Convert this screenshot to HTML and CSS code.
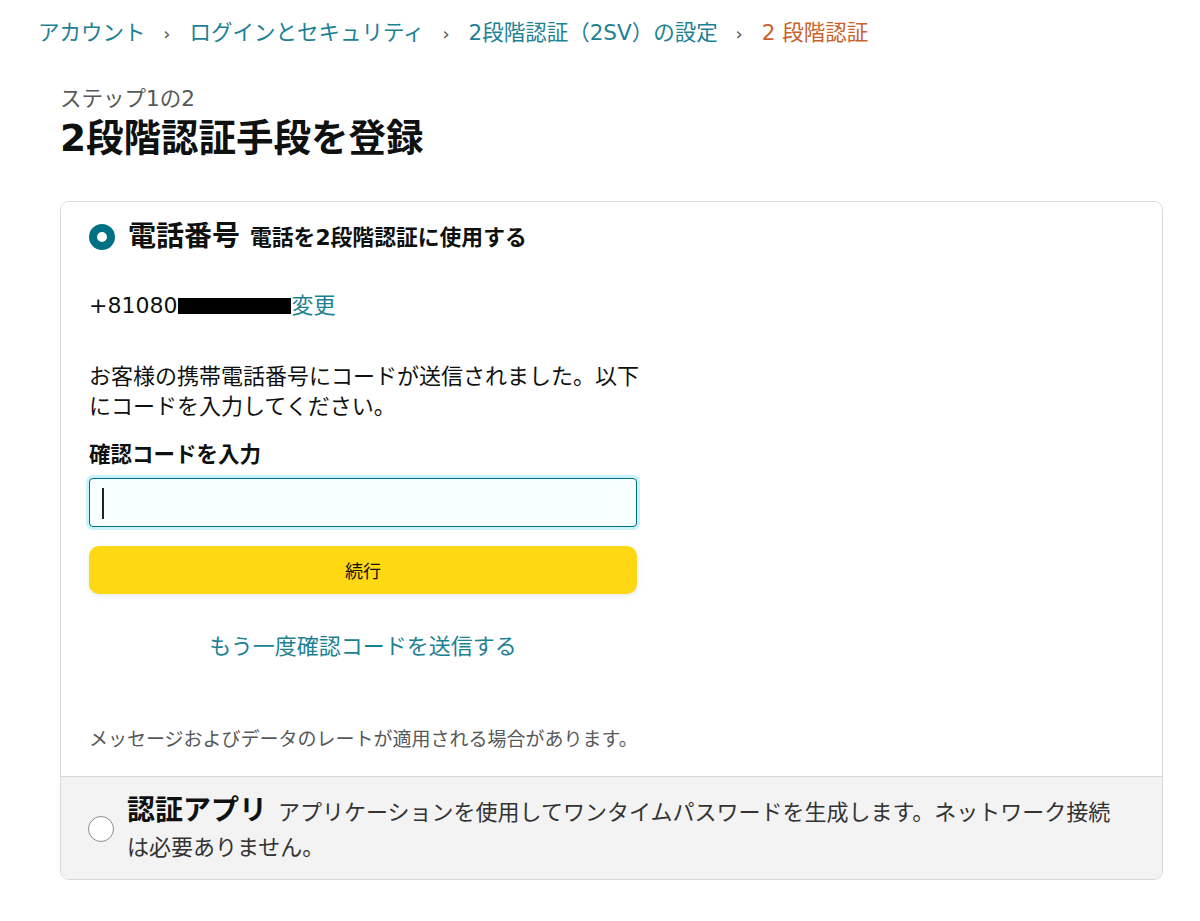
FILE: index.html
```html
<!DOCTYPE html>
<html lang="ja">
<head>
    <meta charset="UTF-8">
    <meta name="viewport" content="width=device-width, initial-scale=1.0">
    <title>2段階認証手段を登録</title>
    <link rel="stylesheet" href="styles.css">
</head>
<body>
    <nav class="breadcrumb">
        <a href="#">アカウント</a>
        <span class="sep">›</span>
        <a href="#">ログインとセキュリティ</a>
        <span class="sep">›</span>
        <a href="#">2段階認証（2SV）の設定</a>
        <span class="sep">›</span>
        <span class="current">2 段階認証</span>
    </nav>

    <main class="page">
        <div class="step">ステップ1の2</div>
        <h1>2段階認証手段を登録</h1>

        <div class="card">
            <section class="option option-active">
                <div class="option-head">
                    <span class="radio radio-checked"></span>
                    <span class="option-title">電話番号</span>
                    <span class="option-sub">電話を2段階認証に使用する</span>
                </div>

                <div class="code-form">
                    <div class="phone-row">+81080<span class="redacted"></span><a href="#">変更</a></div>
                    <p class="sent-text">お客様の携帯電話番号にコードが送信されました。以下にコードを入力してください。</p>
                    <label class="field-label" for="codeInput">確認コードを入力</label>
                    <div id="codeInput" class="code-input" role="textbox"><span class="caret"></span></div>
                    <button class="continue-btn">続行</button>
                    <div class="resend"><a href="#">もう一度確認コードを送信する</a></div>
                </div>

                <p class="note">メッセージおよびデータのレートが適用される場合があります。</p>
            </section>

            <section class="option option-inactive">
                <span class="radio"></span>
                <div class="option-text">
                    <span class="option-title">認証アプリ</span><span class="option-desc">アプリケーションを使用してワンタイムパスワードを生成します。ネットワーク接続は必要ありません。</span>
                </div>
            </section>
        </div>
    </main>
</body>
</html>
```

FILE: styles.css
```css
body {
    font-family: 'DejaVu Sans', 'Noto Sans CJK JP', sans-serif;
    font-size: 22px;
    color: #0f1111;
    background-color: #fff;
    margin: 0;
    padding: 0;
}
a {
    color: #1d8194;
    text-decoration: none;
}
.breadcrumb {
    padding: 18px 0 0 38px;
    line-height: 30px;
    font-size: 21.5px;
}
.breadcrumb .sep {
    color: #555;
    font-size: 18px;
    margin: 0 12px 0 11px;
}
.breadcrumb .current {
    color: #c8622a;
}
.page {
    padding: 0 37px 0 60px;
}
.step {
    margin-top: 37px;
    line-height: 26px;
    font-size: 21.5px;
    color: #565959;
}
h1 {
    margin: 4px 0 41px;
    font-size: 37.5px;
    line-height: 44px;
    font-weight: bold;
}
.card {
    border: 1px solid #d5d9d9;
    border-radius: 9px;
    overflow: hidden;
}
.option-active {
    padding: 15px 28px 24px;
    background-color: #fff;
}
.option-head {
    display: flex;
    align-items: center;
    line-height: 36px;
}
.radio {
    display: inline-block;
    box-sizing: border-box;
    width: 26px;
    height: 26px;
    border-radius: 50%;
    border: 1.5px solid #8a8d8f;
    background-color: #fff;
    flex-shrink: 0;
    margin-right: 13px;
}
.radio-checked {
    border: 8px solid #007185;
    margin-right: 13px;
}
.option-title {
    font-size: 28px;
    font-weight: bold;
}
.option-sub {
    font-size: 21.8px;
    font-weight: bold;
    margin-left: 10px;
    padding-top: 3px;
}
.code-form {
    width: 550px;
}
.phone-row {
    margin-top: 35px;
    line-height: 30px;
}
.redacted {
    display: inline-block;
    width: 113px;
    height: 16px;
    margin-left: 1px;
    background-color: #000;
    vertical-align: -1px;
}
.sent-text {
    margin: 41px 0 0;
    line-height: 30px;
}
.field-label {
    display: block;
    margin-top: 18px;
    line-height: 30px;
    font-weight: bold;
    font-size: 21.5px;
}
.code-input {
    box-sizing: border-box;
    margin-top: 8px;
    width: 548px;
    height: 49px;
    border: 1px solid #007185;
    border-radius: 4px;
    background-color: #f7feff;
    box-shadow: 0 0 0 3px #c8f3fa;
    padding: 9px 12px;
}
.caret {
    display: block;
    width: 2px;
    height: 31px;
    background-color: #222;
}
.continue-btn {
    display: block;
    margin-top: 19px;
    width: 548px;
    height: 48px;
    border: none;
    border-radius: 10px;
    background-color: #ffd814;
    box-shadow: 0 2px 5px rgba(213, 217, 217, 0.5);
    font-family: inherit;
    font-size: 18px;
    color: #0f1111;
    cursor: pointer;
}
.resend {
    margin-top: 38px;
    width: 548px;
    text-align: center;
    line-height: 30px;
}
.note {
    margin: 64px 0 0;
    font-size: 19px;
    line-height: 26px;
    color: #565959;
}
.option-inactive {
    display: flex;
    align-items: center;
    padding: 16px 40px 14px 27px;
    background-color: #f3f3f3;
    border-top: 1px solid #d5d9d9;
}
.option-inactive .radio {
    margin-right: 13px;
}
.option-text {
    line-height: 35px;
}
.option-desc {
    margin-left: 11px;
    color: #333;
}
```
